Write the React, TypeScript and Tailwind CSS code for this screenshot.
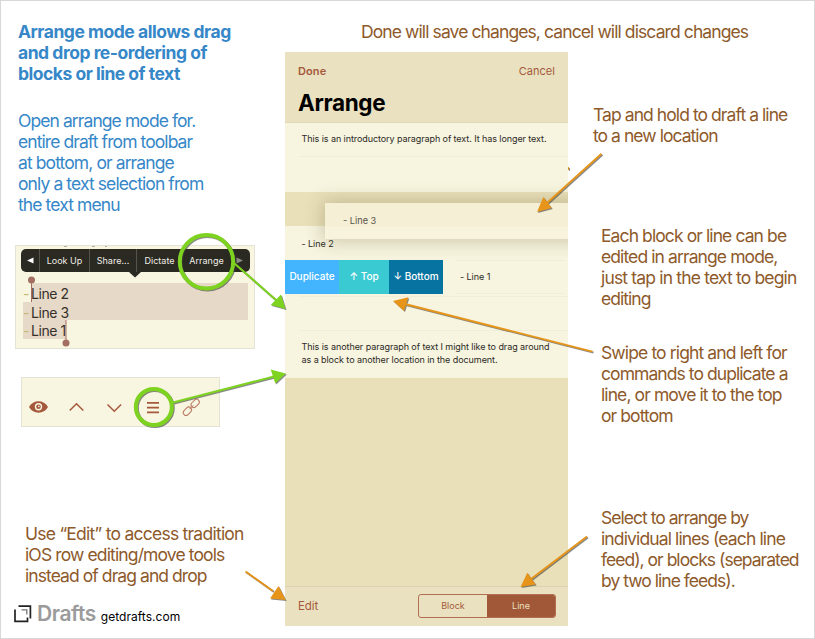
import React from "react";

type NoteLine = [text: string, tracking: string];

function Note({ lines, className }: { lines: NoteLine[]; className: string }) {
  return (
    <p className={`text-[17.5px] leading-[21px] whitespace-nowrap ${className}`}>
      {lines.map(([text, tracking]) => (
        <span key={text} className={`block ${tracking}`}>
          {text}
        </span>
      ))}
    </p>
  );
}

function TextMenuCard() {
  return (
    <div className="relative mt-[30px] ml-[14px] h-[104px] w-[240px] overflow-hidden border border-[#e4e3d6] bg-[#f8f5e0] px-[5px] pt-[3px]">
      <div className="flex h-[23px] w-[229px] items-center rounded-[5px] bg-[#2a2922] text-[9px] leading-[23px] tracking-[0.02px] whitespace-nowrap text-[#f0eee6]">
        <div className="flex h-full w-[19px] items-center justify-center border-r border-[#55544c]">
          <svg width="7" height="7" viewBox="0 0 7 7"><path d="M0 3.5 6.5 0.5V6.5Z" fill="#fff" /></svg>
        </div>
        <div className="h-full w-[50px] border-r border-[#55544c] text-center">Look Up</div>
        <div className="h-full w-[47px] border-r border-[#55544c] text-center">Share...</div>
        <div className="h-full w-[45px] text-center">Dictate</div>
        <div className="h-full w-[49px] text-center">Arrange</div>
        <div className="flex h-full flex-1 items-center justify-center pr-[3px]">
          <svg width="7" height="7" viewBox="0 0 7 7"><path d="M7 3.5 0.5 0.5V6.5Z" fill="#8c8b85" /></svg>
        </div>
      </div>
      <svg className="ml-[108px] block" width="12" height="6" viewBox="0 0 12 6"><path d="M0 0H12L6 5.5Z" fill="#2a2922" /></svg>
      <div className="mt-[5px] ml-[2px] w-[225px] text-[14px] leading-[21.5px] tracking-[-0.45px] text-[#35302b]">
        {["Line 2", "Line 3", "Line 1"].map((label, i) => (
          <div key={label} className={`flex h-[18.5px] ${i === 2 ? "w-[43px] bg-[#e7d9c7]" : i === 1 ? "bg-[#e7d9c7]" : ""}`}>
            <span className="w-[8px] shrink-0 text-[#c3ba6c]">-</span>
            <span className={`flex-1 whitespace-nowrap ${i === 0 ? "bg-[#e7d9c7]" : ""}`}>{label}</span>
          </div>
        ))}
      </div>
      <svg className="absolute top-0 left-0" width="238" height="102" viewBox="16 246 238 102">
        <path d="M31.5 280V302M66 320V342" stroke="#a46f62" strokeWidth="1" />
        <circle cx="31.5" cy="280" r="3.5" fill="#a46f62" />
        <circle cx="66" cy="343" r="3.5" fill="#a46f62" />
        <path d="M64 246.3H67M92 246.3H95M105 246.3H107" stroke="#8a877a" strokeWidth="0.8" />
      </svg>
    </div>
  );
}

function ToolbarCard() {
  return (
    <div className="mt-[28px] ml-[20px] h-[50px] w-[199px] border border-[#e4e3d6] bg-[#f8f5e0]">
      <svg width="197" height="48" viewBox="22 378 197 48" fill="none" stroke="#a4593c">
        <path d="M29 407C33 399.4 44 399.4 48 407C44 414.6 33 414.6 29 407Z" fill="#a4593c" stroke="none" />
        <circle cx="38.5" cy="406.8" r="3" stroke="#f8f5e0" strokeWidth="1.4" />
        <circle cx="38.9" cy="406.4" r="0.8" fill="#f8f5e0" stroke="none" />
        <path d="M69.7 410.5 76.5 403.7 83.3 410.5M107.5 404.5 114.3 411.3 121.1 404.5" strokeWidth="1.5" />
        <path d="M147 402.8H159M147 407.6H159M147 412.4H159" strokeWidth="1.8" />
        <g stroke="#b87a60" strokeWidth="1">
          <rect x="-4.7" y="-2.8" width="9.4" height="5.6" rx="2.8" transform="translate(195.2 403.4) rotate(-45)" />
          <rect x="-4.7" y="-2.8" width="9.4" height="5.6" rx="2.8" transform="translate(187.4 411.2) rotate(-45)" />
          <path d="M189.3 409.3 193.3 405.3" />
        </g>
      </svg>
    </div>
  );
}

function Phone() {
  return (
    <div className="flex h-[574px] w-[283px] shrink-0 flex-col overflow-hidden bg-[#e9e0ba] text-[9px] text-[#2b2a26]">
      <header className="h-[71px] border-b border-[#e0d8b8] bg-[#eae1c0] px-[13px] pt-[12px]">
        <div className="flex h-[15px] items-center justify-between text-[11px] leading-[15px] text-[#a4593c]">
          <span className="font-semibold tracking-[0.1px]">Done</span>
          <span className="tracking-[0.05px]">Cancel</span>
        </div>
        <h1 className="mt-[10px] text-[22.5px] leading-[27px] font-bold tracking-[-0.35px] text-black">Arrange</h1>
      </header>
      <div className="flex h-[69px] flex-col bg-[#f7f4df]">
        <div className="ml-[13px] h-[34px] border-b border-[#f1edd6] pt-[10px] pl-[3.5px] leading-[12px] tracking-[-0.08px] whitespace-nowrap">
          This is an introductory paragraph of text. It has longer text.
        </div>
      </div>
      <div className="relative h-[34px]">
        <div className="absolute top-[11px] left-[40px] flex h-[36px] w-[260px] items-center bg-[linear-gradient(#f5efd5_66%,#f7f3dc_67%)] pb-[1px] pl-[18px] text-[9.2px] text-[#55534a] shadow-[0_0_18px_2px_rgba(90,80,30,0.28)]">
          <span>- Line 3</span>
        </div>
      </div>
      <div className="h-[34px] bg-[#f7f4df] pt-[12px] pl-[16.5px] leading-[12px] tracking-[-0.05px]">- Line 2</div>
      <div className="flex h-[34px] items-center bg-[#f7f4df]">
        <div className="flex h-full items-center text-[10px] leading-[33px] font-medium whitespace-nowrap text-white">
          <div className="h-full w-[54px] bg-[#43b5ff] text-center tracking-[0px]">Duplicate</div>
          <div className="h-full w-[50px] bg-[#39cad2] text-center">↑ Top</div>
          <div className="h-full w-[54px] bg-[#0773a1] text-center">↓ Bottom</div>
        </div>
        <div className="ml-[13px] h-full w-[110px] border-y border-[#f1edd6] pt-[10px] pl-[4px] leading-[12px] tracking-[-0.05px]">- Line 1</div>
      </div>
      <div className="h-[84px] bg-[#f7f4df] pl-[13px]">
        <div className="mt-[2px] h-[35px] border-y border-[#f1edd6]" />
        <p className="pt-[10px] pl-[3.5px] leading-[12.5px] tracking-[-0.07px] whitespace-nowrap">
          This is another paragraph of text I might like to drag around
          <br />
          as a block to another location in the document.
        </p>
      </div>
      <div className="flex-1" />
      <footer className="flex h-[40px] items-center justify-between border-t border-[#dcd3b0] bg-[#eae1c0] pr-[12px] pl-[13px] text-[#a4593c]">
        <span className="text-[11.5px] tracking-[-0.1px]">Edit</span>
        <div className="mb-[1px] flex h-[24px] w-[138px] overflow-hidden rounded-[3px] border border-[#b36d50] text-center leading-[22px]">
          <span className="flex-1">Block</span>
          <span className="flex-1 bg-[#a05838] text-[#eae1c0]">Line</span>
        </div>
      </footer>
    </div>
  );
}

function Annotations() {
  return (
    <svg className="pointer-events-none absolute -top-px -left-px drop-shadow-[1px_1px_0.5px_rgba(60,60,60,0.6)]" width="815" height="639" viewBox="0 0 815 639" fill="none">
      <g stroke="#7ed321">
        <circle cx="206.5" cy="261.8" r="26.7" strokeWidth="4" />
        <circle cx="153.8" cy="407" r="18" strokeWidth="4" />
        <path d="M234.5 263.5 276 300M173 402.5 274 376.5" strokeWidth="2" />
      </g>
      <path d="M285.5 309 281 294.5 270.7 305ZM285.8 373.5 270.7 369.5 275.3 383.5Z" fill="#7ed321" />
      <path d="M601.5 153.7 547 203M592.5 351.6 405 304M245.5 571.5 273 591M587 536.5 531 579" stroke="#e6951a" strokeWidth="1.9" />
      <path d="M537 212 543.3 197 551.7 208ZM393 301 408.3 297.3 404 311ZM285.7 600 278.5 586 270 598.5ZM520.5 587 527.3 572.7 535.7 584.5ZM568 167H569V170H568Z" fill="#e6951a" />
    </svg>
  );
}

export default function App() {
  return (
    <div className="relative flex h-[639px] w-[815px] overflow-hidden border border-[#d8d8d8] bg-white font-[Inter,'Liberation_Sans',sans-serif]">
      <aside className="h-full w-[284px] shrink-0 text-[#3687c8]">
        <Note
          className="mt-[20px] ml-[17px] font-bold"
          lines={[
            ["Arrange mode allows drag", "tracking-[-0.48px]"],
            ["and drop re-ordering of", "tracking-[-0.47px]"],
            ["blocks or line of text", "tracking-[-0.5px]"],
          ]}
        />
        <Note
          className="mt-[26px] ml-[17px]"
          lines={[
            ["Open arrange mode for.", "tracking-[-0.92px]"],
            ["entire draft from toolbar", "tracking-[-0.92px]"],
            ["at bottom, or arrange", "tracking-[-0.9px]"],
            ["only a text selection from", "tracking-[-0.9px]"],
            ["the text menu", "tracking-[-0.9px]"],
          ]}
        />
        <TextMenuCard />
        <ToolbarCard />
        <Note
          className="mt-[96px] ml-[24px] text-[#8e5a2b]"
          lines={[
            ["Use “Edit” to access tradition", "tracking-[-0.75px]"],
            ["iOS row editing/move tools", "tracking-[-0.87px]"],
            ["instead of drag and drop", "tracking-[-0.93px]"],
          ]}
        />
        <div className="mt-[15px] ml-[13px] flex items-baseline whitespace-nowrap">
          <svg width="18" height="18" viewBox="0 0 18 18" fill="none" className="translate-y-[2px]" stroke="#222">
            <path d="M4.5 1.2H16.4V13.5" strokeWidth="1.7" />
            <path d="M1 4.5V16.3H13.5V12.5" strokeWidth="1.7" />
            <path d="M7.5 4.8H12.8V9.5" stroke="#777" strokeWidth="1.3" />
          </svg>
          <span className="ml-[5px] text-[21px] leading-[25px] font-semibold tracking-[-0.45px] text-[#9b9b9b]">Drafts</span>
          <span className="ml-[5px] text-[12px] tracking-[0.03px] text-black">getdrafts.com</span>
        </div>
      </aside>
      <main className="flex-1 text-[#8e5a2b]">
        <div className="h-[51px] pt-[20px] pl-[76px]">
          <Note className="" lines={[["Done will save changes, cancel will discard changes", "tracking-[-0.9px]"]]} />
        </div>
        <div className="flex">
          <Phone />
          <div className="flex-1 pl-[33px]">
            <Note
              className="mt-[52px] -ml-[8px]"
              lines={[
                ["Tap and hold to draft a line", "tracking-[-0.93px]"],
                ["to a new location", "tracking-[-0.95px]"],
              ]}
            />
            <Note
              className="mt-[79px]"
              lines={[
                ["Each block or line can be", "tracking-[-0.9px]"],
                ["edited in arrange mode,", "tracking-[-0.9px]"],
                ["just tap in the text to begin", "tracking-[-0.83px]"],
                ["editing", "tracking-[-0.95px]"],
              ]}
            />
            <Note
              className="mt-[33px]"
              lines={[
                ["Swipe to right and left for", "tracking-[-0.87px]"],
                ["commands to duplicate a", "tracking-[-0.93px]"],
                ["line, or move it to the top", "tracking-[-0.9px]"],
                ["or bottom", "tracking-[-0.9px]"],
              ]}
            />
            <Note
              className="mt-[81px]"
              lines={[
                ["Select to arrange by", "tracking-[-0.98px]"],
                ["individual lines (each line", "tracking-[-0.87px]"],
                ["feed), or blocks (separated", "tracking-[-0.98px]"],
                ["by two line feeds).", "tracking-[-0.97px]"],
              ]}
            />
          </div>
        </div>
      </main>
      <Annotations />
    </div>
  );
}
